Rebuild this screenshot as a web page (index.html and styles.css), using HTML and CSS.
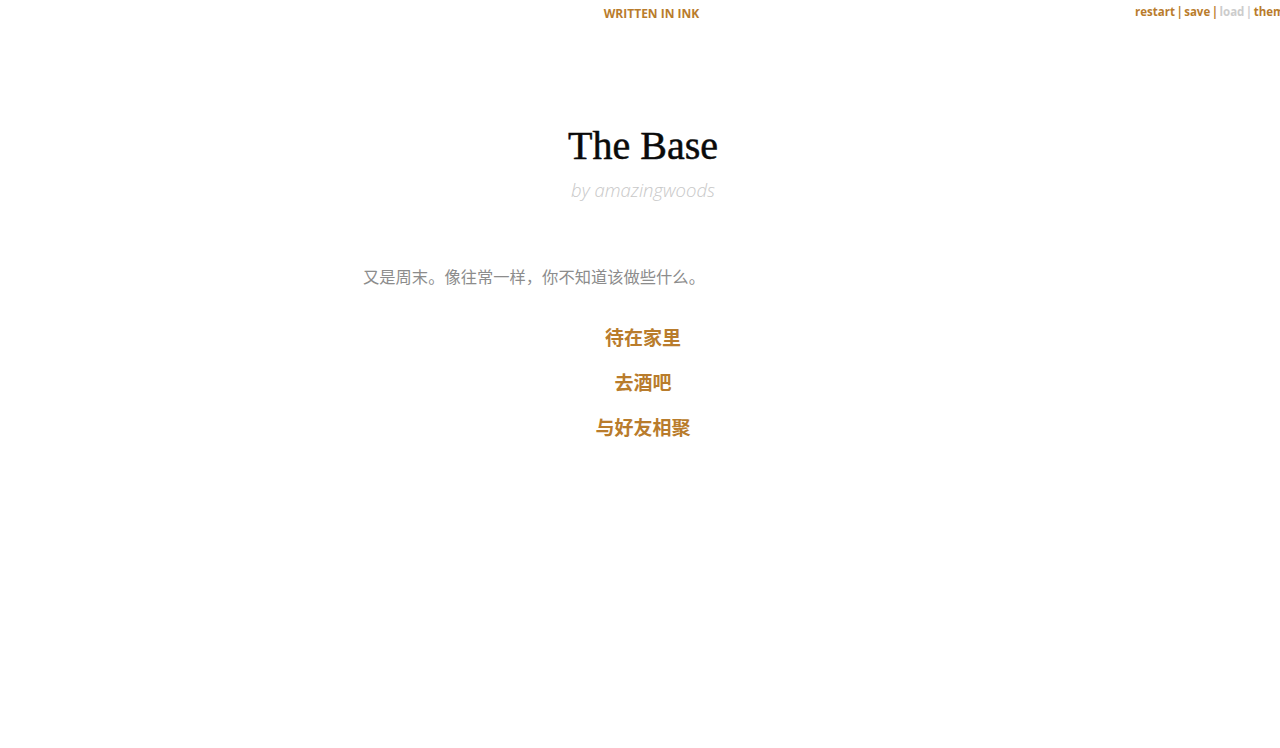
FILE: index.html
```html
<!DOCTYPE html>
<html lang="zh">
<head>
<meta charset="utf-8">
<title>The Base</title>
<link rel="stylesheet" href="styles.css">
</head>
<body>
<div class="written-in-ink">WRITTEN IN INK</div>
<nav class="controls">
  <a class="ctl" href="#">restart</a><a class="ctl" href="#">save</a><a class="ctl disabled" href="#">load</a><a class="ctl" href="#">theme</a>
</nav>
<main class="container">
  <header class="header">
    <h1 class="title">The Base</h1>
    <h2 class="byline">by amazingwoods</h2>
  </header>
  <div class="story">
    <p class="text">又是周末。像往常一样，你不知道该做些什么。</p>
    <p class="choice"><a href="#">待在家里</a></p>
    <p class="choice"><a href="#">去酒吧</a></p>
    <p class="choice"><a href="#">与好友相聚</a></p>
  </div>
</main>
</body>
</html>
```

FILE: styles.css
```css
html, body {
  margin: 0;
  padding: 0;
  background: #ffffff;
  overflow: hidden;
}
body {
  font-family: "Open Sans", "Noto Sans CJK SC", sans-serif;
  padding-left: 6px;
}
.written-in-ink {
  position: fixed;
  top: 0;
  left: 0;
  width: 100%;
  text-align: center;
  font-family: "Open Sans", sans-serif;
  font-weight: 700;
  font-size: 12px;
  line-height: 16px;
  padding-top: 6px;
  padding-bottom: 6px;
  padding-left: 23px;
  color: #b97c2c;
  background: #ffffff;
  box-sizing: border-box;
}
.controls {
  position: fixed;
  top: 4px;
  left: 1135px;
  white-space: nowrap;
  font-family: "Open Sans", sans-serif;
  font-size: 11.5px;
  line-height: 16px;
  word-spacing: -1.5px;
  background: #ffffff;
}
.ctl {
  color: #b97c2c;
  font-weight: 700;
  text-decoration: none;
}
.ctl:not(:last-child)::after {
  content: " | ";
  white-space: pre;
}
.ctl.disabled {
  color: #cccccc;
}
.container {
  width: 600px;
  box-sizing: border-box;
  margin: 0 auto;
  padding: 121px 20px 20px;
}
.header {
  text-align: center;
}
.title {
  margin: 0;
  font-family: "Liberation Serif", "Times New Roman", serif;
  font-weight: 400;
  font-size: 40px;
  line-height: 50px;
  color: #0a0a0a;
  -webkit-text-stroke: 0.5px #0a0a0a;
}
.byline {
  margin: 6px 0 0;
  font-family: "Open Sans", sans-serif;
  font-style: italic;
  font-weight: 300;
  font-size: 18.5px;
  line-height: 26px;
  color: #c8c8c8;
}
.story {
  padding-top: 59px;
}
.text {
  margin: 0;
  font-family: "Noto Sans CJK SC", sans-serif;
  font-size: 16.3px;
  line-height: 29px;
  color: #8c8c8c;
  font-weight: 400;
}
.choice {
  margin: 13px 0 0;
  text-align: center;
  line-height: 29px;
}
.text + .choice {
  margin-top: 31px;
}
.choice a {
  font-family: "Noto Sans CJK SC", sans-serif;
  font-weight: 700;
  font-size: 19px;
  color: #b97c2c;
  text-decoration: none;
}
```
